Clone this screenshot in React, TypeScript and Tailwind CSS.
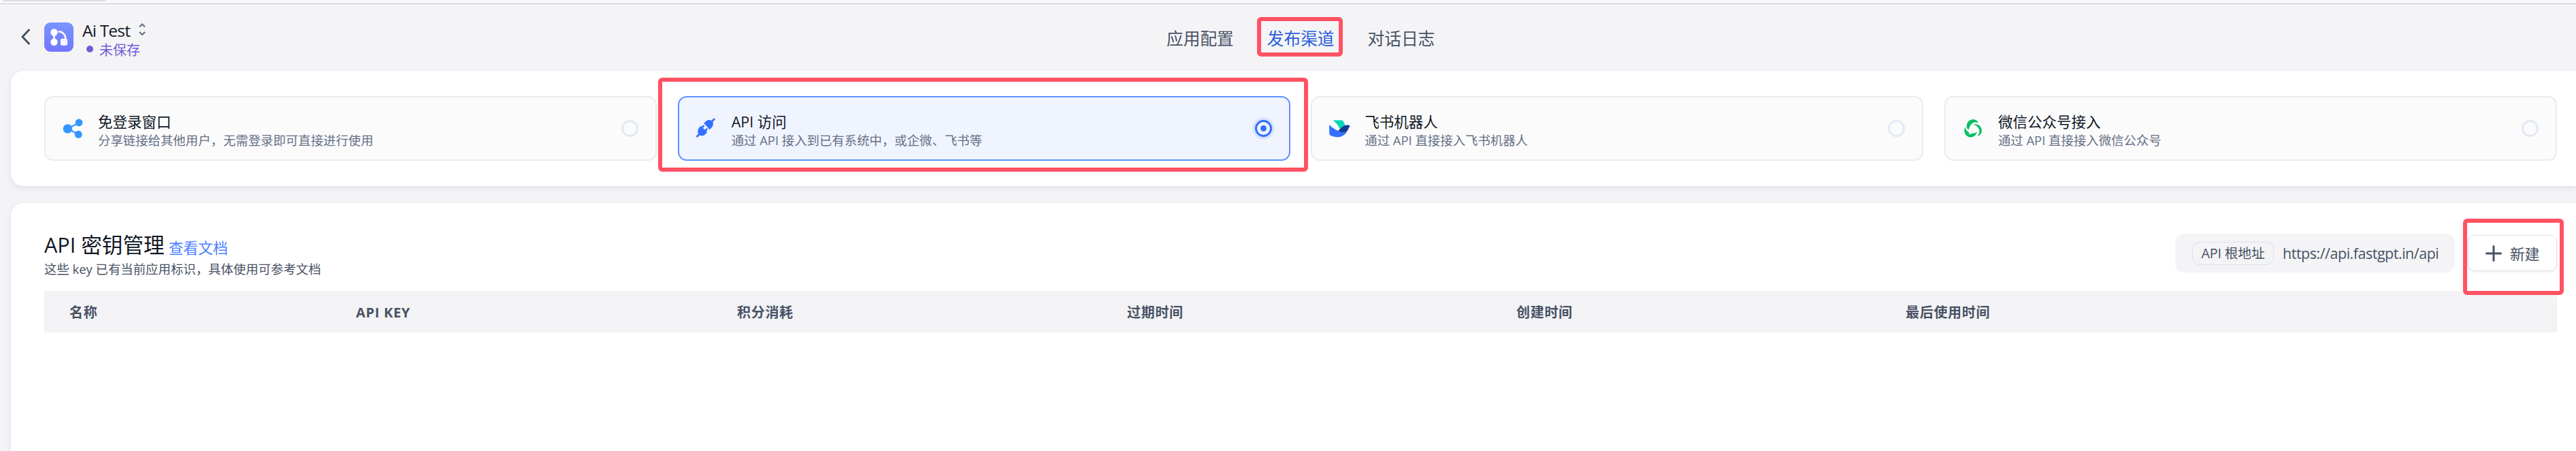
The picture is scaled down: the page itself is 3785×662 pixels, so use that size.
import React from "react";

type Channel = {
  title: string;
  desc: string;
  icon: React.ReactNode;
  active?: boolean;
};

function AppIcon() {
  return (
    <svg width="43" height="43" viewBox="0 0 43 43" className="block shrink-0">
      <defs>
        <linearGradient id="appFill" x1="0" y1="0" x2="0" y2="1">
          <stop offset="0" stopColor="#7895fe" />
          <stop offset="1" stopColor="#7376ff" />
        </linearGradient>
      </defs>
      <rect width="43" height="43" rx="9" fill="url(#appFill)" />
      <circle cx="14.5" cy="14.5" r="5.2" fill="#fff" />
      <circle cx="14.5" cy="28.7" r="5.2" fill="#fff" />
      <path d="M14.5 14.5v14" stroke="#fff" strokeWidth="2.6" />
      <path d="M21.8 13.4c5 .1 9 4 9.3 9.200" stroke="#fff" strokeWidth="2.6" strokeLinecap="round" fill="none" />
      <rect x="24" y="23.8" width="10" height="10" rx="2" fill="#fff" />
      <rect x="26.5" y="26.3" width="5" height="5" fill="none" stroke="#dfe2ff" strokeWidth="1" />
    </svg>
  );
}

function ShareIcon() {
  return (
    <svg width="31" height="31" viewBox="0 0 31 31" className="block">
      <path d="M7.5 16 24.5 7M7.5 16l16.5 8.5" stroke="#3396ff" strokeWidth="2" />
      <circle cx="7.4" cy="16" r="6.8" fill="#3396ff" />
      <circle cx="24" cy="7" r="5.4" fill="#3396ff" />
      <circle cx="23.2" cy="24.3" r="5.5" fill="#3396ff" />
    </svg>
  );
}

function PlugIcon() {
  return (
    <svg width="31" height="31" viewBox="2 1.2 31 31" className="block">
      <g fill="#3370ff" stroke="#3370ff" strokeLinecap="round" strokeLinejoin="round">
        <path d="M3.3 28.5 6.5 25M25 6.5 28.3 3.2" strokeWidth="2.8" fill="none" />
        <path d="M14 9.5 21.8 18C26 14.5 28 9.5 25 6.5 21.5 3 16 5 14 9.5Z" strokeWidth="1" />
        <path d="M8.8 13.8 17.5 21.8C15.5 26.5 10 29 6.5 25.5 3.5 22.5 4.5 17 8.8 13.8Z" strokeWidth="1" />
        <path d="M10 15.8 12.8 13.2M14.8 20.3 17.6 17.7" strokeWidth="2.6" fill="none" />
      </g>
    </svg>
  );
}

function FeishuIcon() {
  return (
    <svg width="31" height="31" viewBox="0 0 31 31" className="block">
      <path d="M5.5 3.5H19.3c2 2 3.7 5 4.2 8.2L16.8 18.5C14.5 12.8 11 7.5 5.5 3.5Z" fill="#00d6b9" />
      <path d="M0 10.3C5.5 15.5 11.5 19 18 21c3 .7 5.5.4 8-.6C22.5 26 17 28.5 11 28.3 6.500 28 2.500 26.500.3 24.500Z" fill="#3370ff" />
      <path d="M12.8 18.8C17 16.5 18.5 11.8 25 10.7c2.200-.3 4 .1 5.800.8C28.500 14.500 28 18.300 25.500 20.300 21.500 22.800 16.500 21.300 12.800 18.800Z" fill="#133c9a" />
    </svg>
  );
}

function WechatIcon() {
  return (
    <svg width="31" height="31" viewBox="0 0 31 31" className="block">
      <g fill="#07c160" transform="translate(1.3 .3) scale(.96 .93)">
        <path d="M4.5 13C4.5 6.500 9 2.200 14.500 2.200c3.500 0 6.300 1.600 8 5.300-5-1.800-8.500-.8-11 2.300-1.600 2-2.600 4.300-3.900 8.700C5.500 17 4.500 15 4.500 13Z" />
        <path d="M15 9.900c6.500-1.700 12.700 3 12.700 10 0 4-2.400 7.300-6.900 9.100 3.100-4 4-7.500 2.800-11C22.300 14 19.300 11.500 15 9.900Z" />
        <path d="M2.300 14C-.5 20 1.500 27.500 7.500 29.700c5.500 2 11-1.200 13-7.700-3 1.800-6 2.400-8.500 2.300L8.300 26.300 8.600 23C5 21 3 18 2.300 14Z" />
      </g>
    </svg>
  );
}

const channels: Channel[] = [
  { title: "免登录窗口", desc: "分享链接给其他用户，无需登录即可直接进行使用", icon: <ShareIcon /> },
  { title: "API 访问", desc: "通过 API 接入到已有系统中，或企微、飞书等", icon: <PlugIcon />, active: true },
  { title: "飞书机器人", desc: "通过 API 直接接入飞书机器人", icon: <FeishuIcon /> },
  { title: "微信公众号接入", desc: "通过 API 直接接入微信公众号", icon: <WechatIcon /> },
];

function Radio({ active }: { active?: boolean }) {
  if (active) {
    return (
      <span className="flex size-[25px] items-center justify-center rounded-full border-[3px] border-[#3370ff] bg-[#f0f4ff] ring-[3.5px] ring-[#d6e2ff]">
        <span className="size-[9px] rounded-full bg-[#3370ff]" />
      </span>
    );
  }
  return <span className="size-[25px] rounded-full border-[3px] border-[#e2e9f2]" />;
}

function ChannelCard({ title, desc, icon, active }: Channel) {
  return (
    <div
      className={
        "flex h-[95px] items-center rounded-[13px] border-2 pr-[25px] pl-[25px] " +
        (active ? "border-[#5e92ff] bg-[#f0f4ff]" : "border-[#e8ebf0] bg-[#fbfbfc]")
      }
    >
      <div className="w-[52px] shrink-0">{icon}</div>
      <div className="flex flex-1 flex-col pt-[6px] whitespace-nowrap">
        <div className="text-[21.5px] leading-[28px] text-[#111824]">{title}</div>
        <div className="text-[18.4px] leading-[26px] text-[#667085]">{desc}</div>
      </div>
      <Radio active={active} />
    </div>
  );
}

const columns = [
  { name: "名称", width: "w-[421px]" },
  { name: "API KEY", width: "w-[560px]" },
  { name: "积分消耗", width: "w-[573px]" },
  { name: "过期时间", width: "w-[572px]" },
  { name: "创建时间", width: "w-[572px]" },
  { name: "最后使用时间", width: "w-[572px]" },
];

export default function App() {
  return (
    <div className="relative flex h-[662px] w-[3785px] flex-col overflow-hidden bg-[#f4f4f7] font-['Open_Sans','Noto_Sans_CJK_SC',sans-serif]">
      <div className="h-[6px] shrink-0 border-b border-[#c9c9ce] bg-[#f9f9fb]">
        <div className="ml-[4px] h-[2px] w-[152px] rounded-b-[4px] bg-[#dcdce4]" />
      </div>

      <header className="flex h-[98px] shrink-0 items-start">
        <div className="flex w-[1714px] pt-[27px] pl-[30px]">
          <svg width="15" height="24" viewBox="0 0 15 24" className="mt-[9px] mr-[20px] block" fill="none">
            <path d="M12.5 2 3 12l9.5 10" stroke="#485264" strokeWidth="3" strokeLinecap="round" strokeLinejoin="round" />
          </svg>
          <AppIcon />
          <div className="ml-[13px] flex flex-col whitespace-nowrap">
            <div className="flex h-[24px] items-start">
              <span className="text-[24.5px] leading-[24px] tracking-[-0.8px] text-[#111824]">Ai Test</span>
              <svg width="10" height="20" viewBox="0 0 10 20" className="ml-[13px] block" fill="none" stroke="#667085" strokeWidth="2.2">
                <path d="M1 6.500 5 2.500l4 4M1 14l4 4 4-4" />
              </svg>
            </div>
            <div className="mt-[4px] flex h-[26px] items-center pl-[6px] text-[20px] leading-[26px] text-[#6f5dd7]">
              <span className="mt-[-4px] mr-[9px] size-[10px] rounded-full bg-[#6f5dd7]" />
              未保存
            </div>
          </div>
        </div>
        <nav className="flex gap-[49px] pt-[34px] text-[24.7px] leading-[34px] whitespace-nowrap text-[#485264]">
          <span>应用配置</span>
          <span className="text-[#2b5fd9]">发布渠道</span>
          <span>对话日志</span>
        </nav>
      </header>

      <section className="ml-[16px] h-[169px] shrink-0 rounded-l-[18px] bg-white pt-[37px] pr-[28px] pl-[49px] shadow-[0_4px_10px_rgba(19,51,107,0.08),0_0_1px_rgba(19,51,107,0.1)]">
        <div className="grid grid-cols-4 gap-[30.6px]">
          {channels.map((c) => (
            <ChannelCard key={c.title} {...c} />
          ))}
        </div>
      </section>

      <section className="mt-[25px] ml-[16px] flex-1 rounded-tl-[18px] bg-white pr-[28px] pl-[49px] shadow-[0_4px_10px_rgba(19,51,107,0.08),0_0_1px_rgba(19,51,107,0.15)]">
        <div className="flex h-[129px] items-start justify-between whitespace-nowrap">
          <div className="pt-[39px]">
            <div className="flex h-[44px] items-start">
              <h1 className="text-[30.6px] leading-[44px] text-[#111824]">API 密钥管理</h1>
              <a className="ml-[6px] pt-[12px] text-[21.8px] leading-[30px] text-[#4a80ff]">查看文档</a>
            </div>
            <div className="text-[18.4px] leading-[28px] text-[#485264]">这些 key 已有当前应用标识，具体使用可参考文档</div>
          </div>
          <div className="flex items-center pt-[45px]">
            <div className="flex h-[57px] w-[411px] items-center rounded-[13px] bg-[#f4f4f7] pl-[25px] text-[#485264]">
              <span className="flex h-[34px] w-[120px] items-center justify-center rounded-[11px] border border-[#dfe2ea] text-[19.8px] tracking-[-0.2px]">
                API 根地址
              </span>
              <span className="ml-[13px] pt-[2px] text-[21.5px] tracking-[-0.48px]">https://api.fastgpt.in/api</span>
            </div>
            <button className="ml-[19px] flex h-[53px] w-[131px] items-center rounded-[10px] border border-[#dfe2ea] bg-white pl-[25px] text-[21.8px] text-[#485264] shadow-[0_1px_3px_rgba(19,51,107,0.1)]">
              <svg width="24" height="24" viewBox="0 0 24 24" className="mr-[12px] block" stroke="#485264" strokeWidth="3" strokeLinecap="round">
                <path d="M12 1.5v21M1.5 12h21" />
              </svg>
              <span className="pt-[3px]">新建</span>
            </button>
          </div>
        </div>
        <div className="flex h-[61px] items-center bg-[#f3f3f6] pt-[3px] pl-[37px] text-[20px] leading-[28px] font-bold tracking-[0.7px] whitespace-nowrap text-[#485264]">
          {columns.map((c) => (
            <div key={c.name} className={c.width + " shrink-0"}>
              {c.name}
            </div>
          ))}
        </div>
      </section>

      <div className="absolute top-[25px] left-[1847px] h-[58px] w-[126px] rounded-[6px] border-[6px] border-[#ff5263]" />
      <div className="absolute top-[114px] left-[967px] h-[138px] w-[955px] rounded-[6px] border-[6px] border-[#ff5263]" />
      <div className="absolute top-[321px] left-[3619px] h-[112px] w-[148px] rounded-[6px] border-[6px] border-[#ff5263]" />
    </div>
  );
}
